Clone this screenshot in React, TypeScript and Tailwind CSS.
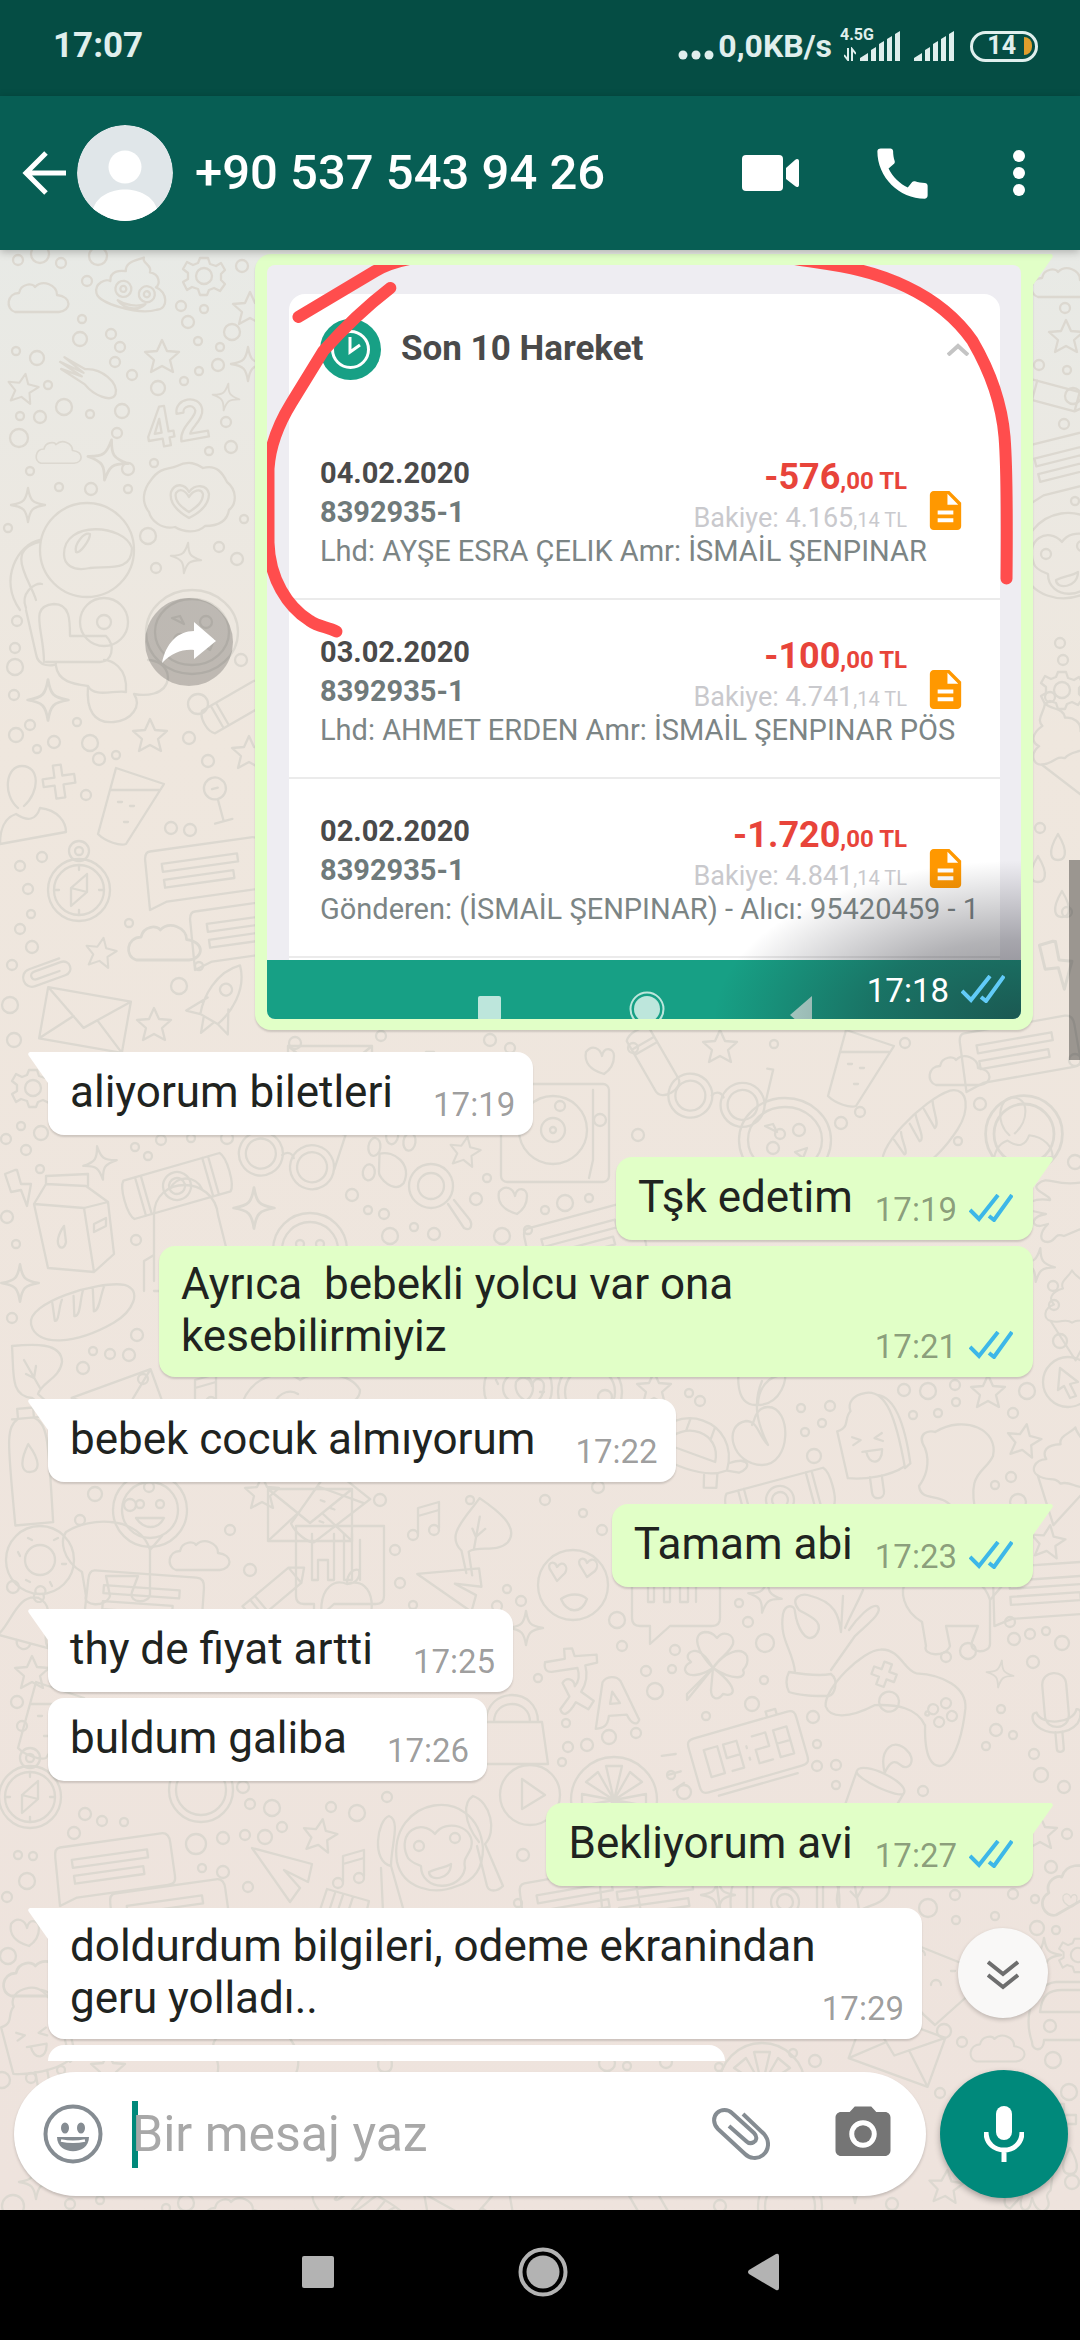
import React from "react";
import { MdCall, MdDescription, MdCameraAlt } from "react-icons/md";

type Placed = [name: string, x: number, y: number, rotate?: number, scale?: number];

const doodles: Placed[] = [
  ["cloud", 39, 297], ["poop", 131, 292, 8], ["gear", 204, 276], ["spoon", 90, 378, 25], ["star", 162, 356],
  ["star", 23, 388, 10, 0.9], ["star", 250, 308], ["sparkle", 248, 364], ["sparkle", 226, 397, 10, 0.8], ["fortyTwo", 176, 422, -10],
  ["cloud", 59, 452, 0, 0.75], ["sparkle", 108, 460, 10, 1.2], ["badge", 189, 498], ["sparkle", 28, 505], ["sparkle", 186, 558, 8, 0.9],
  ["astronaut", 84, 610], ["pizza", 192, 632], ["sparkle", 48, 700, 0, 1.2], ["star", 150, 735], ["tube", 238, 705, -30],
  ["star", 249, 752], ["person", 32, 800], ["plus", 59, 781, -8], ["drink", 130, 808], ["pin", 218, 800, -15],
  ["compass", 79, 890], ["chat", 205, 870, -8], ["chat", 250, 930, -8], ["cloud", 165, 942, 0, 1.2], ["clip", 45, 972, -20],
  ["star", 101, 952, 10, 0.9], ["envelope", 85, 1020, 10], ["star", 154, 1024], ["rocket", 220, 1000, 30],
  ["gear", 33, 1088], ["bolt", 19, 1188], ["sparkle", 100, 1163, -10], ["camera", 177, 1186, -16], ["backpack", 190, 1235],
  ["carton", 74, 1236], ["sparkle", 254, 1208, 0, 1.2], ["glasses", 285, 1160, 15], ["paw", 388, 1165, 8], ["magnifier", 440, 1190],
  ["star", 465, 1151, 10, 0.9], ["heart", 513, 1200], ["smile", 310, 1250], ["bread", 82, 1313, -8], ["sparkle", 20, 1283, 0, 1.1],
  ["leaf", 36, 1374], ["bottle", 30, 1464, -5], ["note", 202, 1392], ["envelope", 120, 1408, -20],
  ["record", 553, 1130], ["person", 1022, 1128, 0, 0.9], ["ring", 1024, 1134, 0, 1.2], ["hand", 1054, 1218], ["sparkle", 1038, 1265, 8],
  ["glasses", 715, 1100, 10], ["pizza", 785, 1140], ["bread", 925, 1135, -35], ["chat", 585, 1240, -15], ["icecream", 1072, 1310, 0, 0.9],
  ["bolt", 1056, 965, 5, 1.3], ["drop", 1058, 848], ["drop", 1062, 905], ["drop", 1038, 870], ["envelope", 330, 1072], ["gear", 430, 1070],
  ["star", 720, 1046], ["tube", 655, 1064, 60], ["chat", 1020, 1050, -10], ["heart", 600, 1060], ["drink", 860, 1070], ["cloud", 960, 1070],
  ["star", 1066, 336], ["cloud", 1062, 282], ["chat", 1078, 460, -14], ["monkey", 1064, 560], ["pencil", 1052, 395, 15], ["gear", 1062, 690],
  ["icecream", 1060, 745, -20], ["star", 988, 1391], ["arrow", 1068, 1382], ["star", 1024, 1440, 10], ["popsicle", 868, 1435, -8],
  ["plant", 762, 1425], ["turtle", 694, 1450, 20], ["blob", 955, 1470], ["icecream", 1064, 1470, 15], ["camera", 780, 1500, -15],
  ["star", 654, 1388], ["sparkle", 765, 1596, 10], ["loveEyes", 573, 1585], ["calendar", 676, 1592], ["star", 1048, 1541, 8], ["chat", 1052, 1590, -4],
  ["okHand", 835, 1650], ["clover", 713, 1668], ["dog", 950, 1610], ["mic", 1056, 1705, -5], ["ring", 590, 1392], ["heart", 530, 1390],
  ["donut", 518, 1388], ["shoe", 300, 1400], ["smile", 150, 1510], ["drink", 330, 1510, 20], ["envelope", 310, 1515], ["donut", 40, 1560],
  ["note", 425, 1520], ["leaf", 480, 1535, 40], ["star", 262, 1492], ["dog", 110, 1560], ["calendar", 340, 1570], ["cloud", 200, 1555],
  ["bell", 28, 1622, 15], ["chat", 145, 1600, 4], ["pencil", 275, 1592, -40], ["apple", 347, 1604], ["plane", 455, 1590, -20],
  ["star", 32, 1672], ["drink", 50, 1722], ["compass", 30, 1797], ["sparkle", 526, 1628], ["bag", 512, 1730], ["ring", 201, 1790],
  ["star", 320, 1835, 10], ["chat", 115, 1866, -8], ["plane", 282, 1876], ["note", 350, 1868], ["monkey", 437, 1852], ["play", 530, 1795],
  ["chat", 170, 1912, -8], ["heart", 25, 1932], ["cloud", 40, 1978, 0, 1.2], ["popsicle", 32, 2030, -10], ["bridge", 345, 1905],
  ["glyph", 592, 1675, -4], ["orange", 614, 1800], ["clock", 748, 1752, -16], ["controller", 900, 1695, 20],
  ["cup", 872, 1800, 25], ["sparkle", 1000, 1674, 8, 0.8], ["star", 1040, 1832], ["cloud", 1072, 1885, -30, 1.2], ["heart", 1070, 1900, 0, 0.5],
  ["chat", 660, 1898, -8], ["chat", 580, 1900, -10], ["camera", 785, 1902], ["sparkle", 718, 1895], ["leaf", 860, 1895, 20], ["pizzaSlice", 935, 1965],
  ["sparkle", 1044, 1955], ["gear", 1078, 1955, 0, 0.9], ["car", 1066, 2012], ["cloud", 998, 2048, 0, 0.9], ["envelope", 897, 2048, 20], ["orange", 762, 2086],
  ["blob", 250, 2060, 60], ["star", 108, 2068], ["drop", 385, 2060], ["star", 946, 2186, 5], ["sparkle", 36, 2182], ["cloud", 235, 2212],
  ["bread", 360, 2212, 35], ["envelope", 470, 2212, -10], ["ring", 790, 2206], ["sparkle", 855, 2186], ["hand", 1030, 2190, -60], ["drop", 1070, 2162],
  ["plus", 1060, 2120], ["tube", 650, 2206, 60],
];

const bubbles: [number, number, number][] = [
  [18, 260, 5], [40, 254, 9], [61, 263, 5], [98, 256, 9], [87, 281, 5], [242, 266, 6], [181, 306, 5], [204, 309, 4], [188, 322, 6],
  [232, 332, 8], [82, 319, 4], [80, 339, 7], [111, 334, 5], [120, 347, 5], [115, 362, 5], [37, 358, 7], [16, 351, 4], [132, 375, 5],
  [198, 341, 4], [220, 347, 4], [218, 365, 6], [199, 371, 4], [184, 381, 4], [158, 388, 7], [48, 385, 4], [64, 407, 8], [20, 416, 4],
  [40, 417, 6], [90, 414, 4], [122, 411, 7], [117, 433, 5], [19, 438, 9], [226, 422, 5], [231, 447, 6], [209, 451, 4], [154, 463, 4],
  [128, 469, 6], [128, 489, 4], [91, 489, 6], [59, 487, 4], [30, 471, 4], [8, 528, 4], [148, 536, 8], [244, 519, 4], [219, 547, 5],
  [237, 559, 6], [156, 568, 5], [17, 621, 5], [15, 648, 5], [15, 667, 8], [241, 660, 6], [198, 704, 10], [14, 695, 5], [30, 725, 5],
  [77, 722, 4], [16, 735, 7], [54, 742, 6], [90, 743, 8], [99, 759, 6], [37, 749, 4], [116, 755, 4], [189, 738, 6], [208, 761, 6],
  [86, 795, 5], [171, 828, 6], [190, 830, 6], [20, 866, 5], [42, 857, 5], [28, 889, 5], [31, 914, 4], [20, 929, 5], [32, 947, 6],
  [129, 923, 4], [12, 965, 5], [10, 1005, 8], [179, 986, 8], [199, 966, 4], [14, 1040, 7], [295, 1043, 6], [381, 1036, 5], [490, 1040, 6], [510, 1048, 5],
  [6, 1139, 5], [21, 1126, 4], [41, 1133, 7], [26, 1150, 5], [40, 1169, 4], [135, 1147, 4], [148, 1156, 4], [161, 1140, 5], [191, 1138, 4],
  [227, 1138, 6], [7, 1217, 6], [16, 1244, 4], [136, 1240, 5], [352, 1195, 6], [368, 1210, 4], [384, 1214, 5], [390, 1236, 8], [414, 1227, 4],
  [434, 1234, 6], [476, 1199, 6], [487, 1178, 4], [502, 1236, 8], [528, 1230, 4], [12, 1318, 5], [137, 1335, 6], [93, 1351, 4], [110, 1354, 5],
  [129, 1355, 6], [83, 1368, 6], [143, 1379, 5], [95, 1494, 7], [149, 1487, 5], [545, 1210, 4], [565, 1203, 8], [589, 1198, 4], [638, 1135, 6],
  [780, 1134, 5], [841, 1123, 6], [958, 1141, 4], [1075, 1162, 7], [1053, 1286, 5], [1054, 1305, 5], [1060, 1341, 7], [605, 1397, 7],
  [689, 1393, 4], [700, 1401, 5], [801, 1408, 4], [830, 1406, 5], [822, 1423, 4], [805, 1432, 4], [814, 1456, 7], [904, 1390, 6], [928, 1391, 8],
  [955, 1385, 5], [956, 1402, 4], [1027, 1391, 8], [913, 1415, 4], [938, 1413, 4], [1013, 1413, 5], [995, 1485, 4], [1011, 1477, 5],
  [1018, 1502, 8], [583, 1513, 4], [602, 1530, 5], [598, 1487, 6], [739, 1603, 4], [617, 1620, 8], [748, 1622, 5], [765, 1643, 9], [622, 1646, 5],
  [675, 1650, 5], [672, 1669, 4], [646, 1671, 5], [655, 1691, 8], [538, 1678, 4], [764, 1680, 4], [752, 1704, 7], [706, 1716, 4], [636, 1733, 5],
  [609, 1737, 7], [587, 1745, 6], [568, 1747, 5], [566, 1723, 4], [562, 1762, 4], [813, 1717, 6], [817, 1744, 4], [817, 1766, 5], [836, 1765, 5],
  [671, 1775, 4], [684, 1792, 7], [968, 1651, 8], [946, 1657, 5], [1010, 1622, 5], [1014, 1639, 6], [1030, 1634, 5], [1046, 1631, 4], [1062, 1643, 7],
  [1033, 1662, 6], [1001, 1709, 4], [996, 1730, 6], [1013, 1735, 4], [986, 1746, 4], [1034, 1754, 5], [1041, 1775, 7], [1064, 1787, 6], [923, 1791, 5],
  [13, 1587, 6], [17, 1702, 6], [22, 1726, 5],
  [400, 1583, 5], [413, 1605, 4], [507, 1589, 4], [521, 1601, 5], [497, 1606, 5], [85, 1814, 6], [102, 1821, 5], [124, 1822, 4],
  [74, 1833, 6], [243, 1787, 6], [250, 1804, 5], [272, 1808, 8], [331, 1807, 5], [357, 1813, 8], [387, 1797, 5], [282, 1827, 5], [265, 1837, 7],
  [245, 1835, 5], [223, 1838, 6], [196, 1844, 10], [18, 1855, 4], [33, 1856, 4], [27, 1881, 8], [7, 1897, 5], [202, 1868, 4], [223, 1872, 6],
  [248, 1887, 5], [523, 1855, 6], [518, 1903, 4], [8, 1956, 8], [836, 1785, 4], [1067, 1834, 5],
  [955, 1895, 5], [1013, 1894, 5], [1035, 1899, 4], [928, 1908, 9], [995, 1916, 4], [956, 1920, 4], [1037, 1928, 7], [1056, 1930, 4],
  [1051, 1867, 6], [944, 2031, 7], [962, 2042, 5], [1053, 2060, 8], [793, 2053, 4], [815, 2061, 6], [627, 2066, 4], [607, 2063, 8],
  [666, 2062, 6], [719, 2067, 4], [2, 2080, 8], [31, 2078, 5], [61, 2070, 4], [13, 2206, 11], [70, 2204, 5], [100, 2200, 4], [186, 2203, 8],
  [166, 2208, 4], [892, 2204, 6], [720, 2206, 6], [940, 2093, 5], [1069, 2092, 8], [1072, 2182, 7], [911, 2164, 4], [1075, 1060, 6],
  [1065, 308, 5], [1039, 365, 5], [1067, 370, 4], [1073, 396, 8], [1064, 424, 5], [1060, 643, 5], [1075, 501, 4], [1050, 697, 5], [1063, 660, 5],
  [1040, 828, 5], [1067, 912, 5], [905, 1043, 5], [774, 1044, 4], [633, 1048, 5], [560, 1106, 5], [600, 1120, 6], [860, 1112, 5], [980, 1104, 6],
  [130, 1505, 6], [230, 1530, 5], [380, 1500, 6], [395, 1550, 5], [470, 1500, 4], [545, 1500, 5], [250, 1570, 6], [80, 1520, 5],
];

function DoodleShapes() {
  return (
    <defs>
      <path id="cloud" d="M-24 15C-34 12-32-4-20-4C-18-14-6-14-4-10C4-18 18-12 18-2C34 0 32 14 20 15Z" />
      <g id="poop"><path d="M-34 6C-38-4-26-10-22-8C-24-18-14-20-8-20C-10-30 2-32 8-36C6-30 18-30 16-22C26-22 28-12 24-8C36-6 40 12 28 14C10 22-30 16-34 6ZM-12 10C-4 18 10 18 16 10C8 14-4 14-12 10Z" /><circle cx="-8" cy="-2" r="8" /><circle cx="-8" cy="-2" r="3" /><circle cx="16" cy="0" r="8" /><circle cx="16" cy="0" r="3" /></g>
      <g id="gear"><path d="M-4-18H4L6-12L12-10L17-13L21-6L17-2V4L21 8L16 15L10 12L5 14L3 19H-4L-6 13L-12 11L-17 14L-21 6L-16 3V-3L-21-7L-17-14L-11-11L-6-13Z" /><circle r="8" /></g>
      <path id="spoon" d="M-32-8L-8-6C6-14 28-8 30 4C30 14 10 14-2 8L-30 4L-8 2L-34-2L-8-2Z" />
      <path id="star" d="M0-16L5-5L17-4L8 4L11 16L0 10L-11 16L-8 4L-17-4L-5-5Z" />
      <path id="sparkle" d="M0-17C2-5 4-2 17 0C4 2 2 5 0 17C-2 5-4 2-17 0C-4-2-2-5 0-17Z" />
      <path id="fortyTwo" d="M-14-18L-30 10V14H-16V22H-9V14H-4V8H-9V-18ZM-16-6V8H-23ZM2-8C2-24 28-24 28-8C28 2 14 8 12 14H30V20H2C2 6 20 0 21-8C20-16 9-14 9-8Z" />
      <g id="badge"><path d="M-38-18C-28-32-20-28-12-32C0-38 8-34 14-30C28-34 34-24 38-16C48-8 48 6 40 12C38 24 28 28 16 28C8 36-6 34-14 29C-28 32-38 22-40 14C-48 4-46-8-38-18Z" /><path d="M0 20C-14 12-20 4-18-6C-14-16-4-14 0-6C6-14 18-14 20-4C20 6 12 14 0 20Z" /><path d="M0 14C-10 8-15 2-13-5C-9-10-4-8 0-1C4-8 12-10 14-4C14 4 8 9 0 14Z" /></g>
      <g id="astronaut"><ellipse cx="3" cy="-60" rx="47" ry="47" /><path d="M-20-56C-20-90 40-86 48-62C48-38 24-44 6-42C-12-38-20-46-20-56ZM-8-58C-10-66 0-78 6-76C6-70-4-56-8-58ZM-58 0L-48 44C-46 58-30 56-28 54M-58-2C-64 -16-50-28-42-26M-48-10C-54-30-80-60-44-68M-64 0C-86-30-66-66-44-70M-28 56C-26 72-10 74 4 76C2 100 10 114 30 112C48 110 58 96 50 84C60 86 82 86 84 68C84 54 70 50 64 50M4 76C10 88 30 80 42 82C44 56 26 50 20 50M-40 52C-40 20-56-4-30-6C-14-6-14 10-14 26H22C32 36 28 52 16 52H-38" /><circle cx="20" cy="12" r="24" /><circle cx="20" cy="12" r="7" /></g>
      <g id="pizza"><ellipse rx="46" ry="42" /><ellipse rx="37" ry="33" /><circle cx="14" cy="-10" r="6" /><circle cx="-12" cy="8" r="6" /><path d="M-20-14L-8-8L-12-16ZM10 12L22 8L18 18Z" /></g>
      <path id="tube" d="M-34-13H24C36-13 36 13 24 13H-34C-40 8-40-8-34-13ZM-24-13V13M-18-13V13" />
      <path id="person" d="M-32 44C-32 22-22 16-16 14C-4 22 4 20 8 8C26 10 34 22 34 32ZM-14 8C-30-6-26-34-10-34C8-34 8-8-8 6" />
      <path id="plus" d="M-4-16H4V-5H16V4H4V17H-5V4H-16V-4H-4Z" />
      <path id="drink" d="M-14-40L-32 26C-24 34-10 38-4 36L34-24ZM-20-18H30M-12-6H-8M0-2H4M-6 14H-2" />
      <path id="pin" d="M-11-12A11 11 0 1 1 11-12A11 11 0 1 1-11-12M-3-12H3M0-1V22M-9 22H9" />
      <g id="compass"><circle r="31" /><circle r="25" /><circle cy="-39" r="10" /><circle cy="-39" r="4" /><path d="M8-16L-8-2L-8 16L8 2ZM-8-2L8 2M0-25V-20M0 25V20M-25 0H-20M25 0H20" /></g>
      <path id="chat" d="M-52-26H50C56-26 58-22 58-16V18C58 24 56 26 50 26H-42L-60 32L-58-16C-58-22-56-26-52-26ZM-42-12H34V-4H-42ZM-42 4H28V12H-42Z" />
      <path id="clip" d="M18-8H-14C-26-8-26 10-14 10H18C28 10 28-4 18-4H-10C-16-4-16 4-10 4H14" />
      <path id="envelope" d="M-42-26H42V26H-42ZM-42-26L0 8L42-26M-42 26L-12-2M42 26L12-2" />
      <path id="rocket" d="M0-40C18-22 16 6 10 22H-10C-16 6-18-22 0-40ZM-12 4L-24 26L-10 22M12 4L24 26L10 22M-6 22L0 38L6 22M-6-12A6 6 0 1 1 6-12A6 6 0 1 1-6-12" />
      <path id="bolt" d="M-4-18L-14-14L-8 4L2 2L8 18L12-4L2-4L-2-18Z" />
      <g id="camera"><path d="M-50-20H50C56-14 56 14 50 20H-50C-56 14-56-14-50-20ZM-38-20V20M38-20V20M-32-20V20M32-20V20" /><circle r="14" /><circle r="8" /></g>
      <path id="backpack" d="M-36 46V-20C-36-60 24-60 28-20L38 20V56H-36M-36 20L-46 26V56M-20-46C-14-60 6-60 12-46" />
      <path id="carton" d="M-40-32L-28-52L12-50L34-34L40 18L20 36L-26 32ZM-40-32L10-28L34-34M10-28L20 36M-28-52V-60L14-62V-50M-10-10C-24 10-10 18-8 6ZM20-12L32-18V-10L20-4Z" />
      <g id="glasses"><circle cx="-25" r="22" /><circle cx="-25" r="15" /><circle cx="28" r="22" /><circle cx="28" r="15" /><path d="M-4-4C0-10 6-8 8-4M50-4L52-40L46-40" /></g>
      <g id="paw"><path d="M-10-10C4-16 24-4 18 16C10 28-8 14-8 8Z" /><ellipse cx="-16" cy="-16" rx="6" ry="9" /><ellipse cx="0" cy="-30" rx="6" ry="9" /><ellipse cx="18" cy="-26" rx="6" ry="9" /><ellipse cx="-18" cy="10" rx="6" ry="8" /></g>
      <g id="magnifier"><circle cx="-9" cy="-4" r="22" /><circle cx="-9" cy="-4" r="13" /><path d="M8 14L24 38C32 42 32 34 30 30L14 10" /></g>
      <path id="heart" d="M4 14C-10 10-16 2-14-8C-8-16 0-12 2-4C4-14 14-12 14-4C14 4 10 10 4 14Z" />
      <g id="smile"><circle r="37" /><circle r="28" /><circle cx="-10" cy="-6" r="4" /><circle cx="10" cy="-6" r="4" /><path d="M-14 8C-6 20 8 20 14 8Z" /></g>
      <path id="bread" d="M-52 4C-54-18 20-30 46-22C64-14 50 6 30 14C-10 30-50 28-52 4ZM-28-14L-28 4C-24 6-22-10-18-16M-6-18L-8 2C-2 4 0-14 4-22M14-22L12 0C18 0 20-14 26-24" />
      <path id="leaf" d="M-24-28C-4-30 26-32 26-12C24 4 6 8 2 20L20 36M-24-28C-22 0-26 22-4 24L14 38M-12-14L4 14M-10 0L-2 4L0-8" />
      <path id="bottle" d="M-8-46V-56H8V-46C22-38 20-20 18 60H-20C-20-20-22-38-8-46ZM-14-46H14M0-20C-12 0-8 8 0 8C8 8 12 0 0-20Z" />
      <g id="note"><path d="M-7 14V-12L14-18V8M-7-4L14-10" /><circle cx="-12" cy="15" r="5" /><circle cx="9" cy="10" r="5" /></g>
      <g id="record"><rect x="-52" y="-46" width="108" height="98" rx="6" /><circle r="34" /><circle r="12" /><circle r="3" /><path d="M40-40V30L36 48" /></g>
      <g id="ring"><circle r="32" /><circle r="25" /></g>
      <path id="hand" d="M30-36C0-30-6-44-16-34C-24-28-2-22-4-18C-20-20-28-16-26-8L-8-4C-22-2-24 8-14 8L-6 6C-14 14-16 24-6 24C2 24 0 14 10 18L34 8" />
      <path id="drop" d="M0-14C-12 6-6 12 0 12C6 12 12 6 0-14Z" />
      <g id="arrow"><circle r="25" /><path d="M-8-14L10 0L2 2L8 14L2 16L-4 4L-10 8Z" /></g>
      <path id="icecream" d="M0-44C-4-36-14-32-10-24C-24-20-26-12-20-6C-32-2-32 10-24 12L4 56L28 10C34 4 32-4 24-6C28-14 22-22 14-24C16-34 4-36 0-44ZM-24 12C-12 16-8 8 0 14C10 8 16 16 28 10" />
      <path id="popsicle" d="M-26 40L-30-8C-16-10-22-20-14-26C-16-34-10-42 4-42C24-42 30-14 32 36C16 44-10 44-26 40ZM16-38C34-32 38 0 38 34L32 38M-4 42V58C-4 66 8 66 8 58V42M-16 0L-8 4L-16 8M14 0L6 4L14 8M-8 16H12C10 32-4 30-4 16" />
      <path id="plant" d="M0 40C-30 40-40 0-16-4C-4-4-4 10 6 20C-4 0-10-20 0-44M0 40C30 40 30-18 6-18C-8-18-8 0-10 0M-4-20C20-20 26-50 22-50C6-50-4-36-4-20M-6-20C-30-20-24-60-20-66" />
      <path id="turtle" d="M-44 10C-36-44 34-44 38 8C20 24-24 24-44 10ZM-30 4C-20-26 20-26 24 4ZM-14-28V-16M12-28V-16M38 0C56-14 60-2 50 6L38 8M-30 16L-34 30L-22 30L-18 20M18 20L22 32L34 28L30 14" />
      <path id="blob" d="M-30-22C-40-38-24-40-20-38C10-56 44-40 38-14C30 4 10 0 22 48M-30-22C-24-6-30 8-36 16C-34 34-10 20 0 42" />
      <g id="loveEyes"><circle r="35" /><path d="M-22-14C-28-22-18-26-16-18C-10-26-4-18-8-12L-16-4ZM8-18C2-26 12-30 14-22C20-30 28-22 22-14L14-8ZM-12 14C-4 8 8 8 14 14C8 30-6 28-12 14Z" /></g>
      <path id="calendar" d="M-44-44H44V26C44 32 40 34 36 34H-6L-26 52V34H-36C-40 34-44 32-44 26ZM-28-36V10H-22V-10H-12V10H-6V-36M4-36V10H12V-36M20-30V10" />
      <path id="dog" d="M-44-28C-20-44 30-44 40-10V34C40 44 18 44 22 32L28 16H-4L0 36C-4 48-28 46-24 36L-28 12C-48 0-50-20-44-28ZM40-10L52-24" />
      <g id="donut"><circle r="34" /><circle r="15" /><path d="M-22-8L-20-4M-12-22L-8-20M14-20L18-22M22 4H26M-14 20L-10 22M10 22L12 26" /></g>
      <path id="shoe" d="M-60 10C-50-30-10-30 0-20C16-30 50-28 60-10C60 10 20 6 8 0C-10 12-50 20-60 10ZM-26 4C-20-10-8-10-2-6" />
      <path id="bell" d="M-26 20C-16 8-18-26 4-26C26-22 14 8 26 20ZM-6 20C-6 30 8 30 8 20M0-30A5 5 0 1 1 8-30A5 5 0 1 1 0-30" />
      <path id="pencil" d="M-34-10H26L38 0L26 10H-34ZM-24-10V10M-18-10V10M26-10V10" />
      <path id="apple" d="M0-20C-30-32-36 30-6 30C0 26 4 30 10 28C32 20 30-30 0-20ZM0-20C0-30 6-36 12-34C14-26 8-20 0-20" />
      <path id="plane" d="M-30-28L30-12L26 6L2-6L18 12L8 26Z" />
      <path id="bag" d="M-26-8C-26-44 26-44 26-8M-18-8C-18-32 18-32 18-8ZM-30-8H30L36 34H-34Z" />
      <g id="monkey"><path d="M-40 10C-50-56 40-70 46-4C46 20 34 30 20 34C-4 44-34 36-40 10ZM-30 4C-40-20-16-34-2-18C8-34 40-26 34-4C30 6 26 6 28 16C24 40-16 40-16 14C-20 12-28 10-30 4ZM-8 20C0 16 8 16 14 12C14 28-8 30-8 20Z" /><circle cx="-18" cy="-6" r="5" /><circle cx="18" cy="-14" r="5" /><path d="M-46 14C-66 10-60-32-48-36C-36-32-46-6-46 14ZM-46 14L-34 56M-56 16L-54 60M42-10C26-30 26-50 36-56C54-50 60-20 48-8L66 34C60 40 52 40 50 34L40-6" /></g>
      <g id="play"><circle r="30" /><path d="M-8-16L15 0L-8 14Z" /></g>
      <path id="bridge" d="M-30 20L-18-16L24-4L16 30M-10-12L-16 6M-2-10L-8 8M8-8L2 10" />
      <path id="glyph" d="M-46-16C-48-8-44-6-40-6L-14-8C-12 0-14 6-18 10C-18 2-26 0-30 6L-24 20L-34 32C-32 40-26 38-18 26L-6 34L0 26L-12 16C-6 8-4 0-6-10L6-12V-20L-16-20L-18-28H-26V-18ZM0 54L10 8C14 2 24 2 28 8L44 48C42 54 36 52 32 42H14C12 52 8 54 0 54ZM16 30L19 18L26 30Z" />
      <g id="orange"><circle r="43" /><path d="M0 0L-8-34H8ZM0 0L16-28L28-18ZM0 0L32-6V6ZM0 0L24 20L10 30ZM0 0L-6 32L-20 26ZM0 0L-32 6V-6ZM0 0L-28-18L-16-28Z" /></g>
      <path id="clock" d="M-48-28H48C56-28 56-24 56-20V20C56 26 54 28 48 28H-48C-56 28-56 24-56 20V-20C-56-26-54-28-48-28ZM-40 34H42M28-28V-34H38V-28M-42-14H-28V14H-42ZM-8 0H-22V-14H-8V14H-20M0-6V-4M0 6V8M8-14H22V0H8V14H22M30-14H44V14H30ZM30 0H44M-84-20L-70-18M-84 0H-70M-82 16L-70 12" />
      <g id="controller"><path d="M-66 36C-74 20-50-30-34-36C-16-44-4-24 8-26C34-34 60-30 66-10C72 14 74 40 66 50C56 60 44 50 34 20C20 6 0 10-20 18C-40 40-58 46-66 36Z" /><circle cx="46" cy="-8" r="5" /><circle cx="56" cy="2" r="5" /><circle cx="36" cy="2" r="5" /><circle cx="46" cy="12" r="5" /><circle cx="-8" cy="10" r="10" /><circle cx="32" cy="8" r="2" /><path d="M-34-18H-26V-26H-18V-18H-10V-10H-18V-2H-26V-10H-34Z" /></g>
      <path id="cup" d="M-26-20C-26-32 26-32 26-20C26-12-26-12-26-20ZM-26-20L-20 40H20L26-20M0-30C-16-50-6-66 10-60C24-56 22-40 10-44C2-46 0-40 0-30" />
      <path id="pizzaSlice" d="M-44-30L56 10L0 60C-24 40-46 10-44-30ZM-20-10A5 5 0 1 1-10-10M-4 20A5 5 0 1 1 6 20M16 6H20" />
      <path id="car" d="M-34 30C-44 0-30-28-10-30H20M-26 0C-24-18-16-22-4-22H20M-26 0H20M-34 30C-34 40-22 40-22 28H20M-22 14A6 6 0 1 1-10 14A6 6 0 1 1-22 14" />
      <path id="clover" d="M0 0C-16-16-22-34-8-36C0-36 2-32 4-30C10-38 22-34 20-24C16-14 6-10 0 0C12-16 28-22 34-12C36-4 32 0 30 2C34 10 22 14 0 0C14 10 24 22 18 26C14 28 12 26 10 26C4 34-2 30-2 22ZM0 0C-12 8-26 10-28 2C-28-4-24-4-22-6C-30-12-22-20-14-16C-6-12-4-6 0 0L-26 26V32Z" />
      <path id="okHand" d="M-40 22C-42 0-56-10-52-36C-50-46-40-46-40-38C-38-24-30-6-20-14C-8-28-26-34-36-40C-46-52-34-58-24-54C0-48 4-34 6-18M6-18L8-54M10-22C16-36 24-50 28-60M14-20C22-32 36-46 42-44C50-38 30-24 20-14L-4 20M-46 22C-34 24-14 26-4 24C4 30 0 44-6 46C-20 46-34 46-46 42C-50 34-48 26-46 22Z" />
      <path id="mic" d="M-12-20C-12-36 12-36 12-20V10C12 26-12 26-12 10ZM-20 6C-26 6-26 14-20 20C-10 30 10 30 20 20C24 14 26 6 20 6C16 20-16 20-20 6M-3 27V44C-3 48 4 48 4 44V27" />
    </defs>
  );
}

function Wallpaper() {
  return (
    <div aria-hidden="true" className="absolute inset-0 overflow-hidden bg-linear-to-b from-[#e8eae6] from-0% via-[#efe7de] via-25% to-[#eee3dd]">
      <svg viewBox="0 250 1080 1960" preserveAspectRatio="xMidYMin slice" className="size-full" fill="none" stroke="#dcd8d0" strokeWidth="2.300" strokeLinejoin="round" strokeLinecap="round">
        <DoodleShapes />
        {doodles.map(([name, x, y, rotate = 0, scale = 1], i) => (
          <use key={i} href={"#" + name} transform={`translate(${x} ${y}) rotate(${rotate}) scale(${scale})`} />
        ))}
        {bubbles.map(([x, y, r], i) => (
          <circle key={i} cx={x} cy={y} r={r} />
        ))}
      </svg>
    </div>
  );
}

function SignalBars() {
  return (
    <svg viewBox="0 0 40 30" className="h-[30px] w-10" fill="#e0efed">
      <path d="M0 30V27L8 22V30ZM11 19L16 16V30H11ZM19 13L24 10V30H19ZM27 8L32 5V30H27ZM35 3L40 0V30H35Z" />
    </svg>
  );
}

function StatusBar() {
  return (
    <div className="flex h-24 shrink-0 items-center bg-[#054d44] pr-[42px] pb-1 pl-[53px] text-[#e0efed]">
      <span className="text-[35px] leading-10 font-bold">17:07</span>
      <div className="ml-auto flex items-center">
        <svg viewBox="0 0 36 30" className="mr-1 h-[30px] w-9" fill="currentColor">
          <circle cx="5" cy="24" r="4.5" /><circle cx="18" cy="24" r="4.5" /><circle cx="31" cy="24" r="4.5" />
        </svg>
        <span className="text-[32px] leading-10 font-bold">0,0KB/s</span>
        <div className="relative ml-7">
          <SignalBars />
          <span className="absolute -top-1 -left-5 text-base leading-4 font-bold">4.5G</span>
          <svg viewBox="0 0 12 14" className="absolute bottom-0 -left-4 h-3.5 w-3" fill="none" stroke="currentColor" strokeWidth="2">
            <path d="M4 1V13L0 8M8 14V2L12 7" />
          </svg>
        </div>
        <div className="ml-3.5"><SignalBars /></div>
        <div className="ml-4 flex h-[31px] w-[68px] items-center justify-end overflow-hidden rounded-full border-3 border-current pr-[3px]">
          <span className="mr-2 text-[25px] leading-6 font-bold">14</span>
          <span className="h-[18px] w-2 rounded-r-full bg-[#e09d2c]" />
        </div>
      </div>
    </div>
  );
}

function Header() {
  return (
    <header className="relative z-10 flex h-[154px] shrink-0 items-center bg-[#075e54] pl-[22px] text-white shadow-[0_2px_8px_rgba(0,0,0,0.25)]">
      <button aria-label="Geri">
        <svg viewBox="0 0 44 44" className="h-11 w-11" fill="none" stroke="currentColor" strokeWidth="5">
          <path d="M44 22H4M24 2L4 22L24 42" />
        </svg>
      </button>
      <svg viewBox="0 0 96 96" className="ml-[11px] size-24 rounded-full" aria-label="Profil">
        <circle cx="48" cy="48" r="48" fill="#e0e6e9" />
        <circle cx="48" cy="42" r="16.500" fill="#fff" />
        <path d="M16 84C24 58 72 58 80 84L60 96H36Z" fill="#fff" />
      </svg>
      <h1 className="ml-[22px] text-[49px] leading-[60px] font-medium">+90 537 543 94 26</h1>
      <div className="ml-auto flex items-center pr-[54px]">
        <button aria-label="Görüntülü arama">
          <svg viewBox="0 0 57 36" className="h-9 w-[57px]" fill="currentColor">
            <rect width="41" height="36" rx="4" />
            <path d="M44 13L53 5C55 3 57 4 57 6V30C57 32 55 33 53 31L44 24Z" />
          </svg>
        </button>
        <button aria-label="Sesli arama" className="ml-[70px]"><MdCall className="size-[67px]" /></button>
        <button aria-label="Menü" className="ml-[76px]">
          <svg viewBox="0 0 14 48" className="h-12 w-3.5" fill="currentColor">
            <circle cx="7" cy="7" r="6" /><circle cx="7" cy="24" r="6" /><circle cx="7" cy="41" r="6" />
          </svg>
        </button>
      </div>
    </header>
  );
}

function Ticks({ className }: { className: string }) {
  return (
    <svg viewBox="0 0 44 28" className={"h-7 w-11 shrink-0 " + className} fill="none" stroke="currentColor" strokeWidth="4">
      <path d="M1 16L10 25L29 1M20 22L25 26L43 1" />
    </svg>
  );
}

function Stamp({ time, sent }: { time: string; sent?: boolean }) {
  return (
    <span className="flex items-end gap-3 self-end pb-3.5 text-[33px] leading-8 text-black/40">
      {time}
      {sent && <Ticks className="mb-1 text-[#3db7e8]" />}
    </span>
  );
}

function Tail({ sent }: { sent?: boolean }) {
  return sent ? (
    <svg viewBox="0 0 22 32" className="absolute top-0 left-full -ml-0.5 h-8 w-[22px]" fill="#e1ffc7">
      <path d="M0 0H20Q23 1 21 4L2 31H0Z" />
    </svg>
  ) : (
    <svg viewBox="0 0 22 32" className="absolute top-0 right-full -mr-0.5 h-8 w-[22px]" fill="#fff">
      <path d="M22 0H2Q-1 1 1 4L20 31H22Z" />
    </svg>
  );
}

type BubbleProps = { lines: string[]; time: string; sent?: boolean; tail?: boolean };

function Bubble({ lines, time, sent, tail }: BubbleProps) {
  const side = sent ? "self-end bg-[#e1ffc7] pr-5" : "self-start bg-white pr-[18px]";
  const corner = tail ? (sent ? "rounded-2xl rounded-tr-none" : "rounded-2xl rounded-tl-none") : "rounded-2xl";
  const spacing = tail ? "mt-[22px]" : "mt-1.5";
  const long = lines.length > 1;
  const size = long ? "w-[874px] max-w-full pt-3" : "pt-3.5";
  return (
    <div className={`relative pl-[22px] text-[44px] leading-[52px] text-[#202320] shadow-[0_2px_2px_rgba(0,0,0,0.14)] ${side} ${corner} ${spacing} ${size}`}>
      {tail && <Tail sent={sent} />}
      {lines.slice(0, -1).map((line) => (
        <p key={line} className="whitespace-pre">{line}</p>
      ))}
      <div className={sent ? "flex justify-between gap-[22px]" : "flex justify-between gap-10"}>
        <p className={long ? "pb-[15px]" : "pb-[17px]"}>{lines[lines.length - 1]}</p>
        <Stamp time={time} sent={sent} />
      </div>
    </div>
  );
}

type Movement = { date: string; whole: string; balance: string; note: string };

const movements: Movement[] = [
  { date: "04.02.2020", whole: "-576", balance: "4.165", note: "Lhd: AYŞE ESRA ÇELIK Amr: İSMAİL ŞENPINAR" },
  { date: "03.02.2020", whole: "-100", balance: "4.741", note: "Lhd: AHMET ERDEN Amr: İSMAİL ŞENPINAR PÖS" },
  { date: "02.02.2020", whole: "-1.720", balance: "4.841", note: "Gönderen: (İSMAİL ŞENPINAR) - Alıcı: 95420459 - 1" },
];

function MovementRow({ date, whole, balance, note }: Movement) {
  return (
    <div className="border-b-2 border-[#ebebeb] pt-[33px] pb-[27px] pl-[31px] text-[29px] leading-[39px]">
      <div className="flex h-[78px] items-start pr-[31px]">
        <div>
          <p className="font-bold text-[#4a4a4a]">{date}</p>
          <p className="font-bold text-[#6f7a7a]">8392935-1</p>
        </div>
        <div className="ml-auto pt-1 text-right">
          <p className="text-[36px] font-bold text-[#e8443a]">{whole}<span className="text-2xl leading-[39px]">,00 TL</span></p>
          <p className="text-[27px] leading-[35px] text-[#c9c9cd]">Bakiye: {balance}<span className="text-xl leading-[35px]">,14 TL</span></p>
        </div>
        <MdDescription className="mt-[33px] ml-[15px] size-[47px] shrink-0 text-[#ff9800]" />
      </div>
      <p className="whitespace-nowrap text-[#7c8585]">{note}</p>
    </div>
  );
}

function PhotoMessage() {
  return (
    <div className="mt-1 flex items-center justify-end gap-[22px]">
      <button aria-label="İlet" className="flex size-[88px] items-center justify-center rounded-full bg-black/20 text-white">
        <svg viewBox="0 0 54 42" className="h-[42px] w-[54px]" fill="currentColor">
          <path d="M32 1L54 20L32 38V29C20 28 10 32 0 42C4 22 16 10 32 10Z" />
        </svg>
      </button>
      <div className="relative rounded-2xl rounded-tr-none bg-[#e1ffc7] px-3 py-[11px] shadow-[0_2px_2px_rgba(0,0,0,0.14)]">
        <Tail sent />
        <div className="relative w-[754px] overflow-hidden rounded-lg bg-[#eeedf2] pt-[29px]">
          <div className="mr-[21px] ml-[22px] rounded-t-2xl bg-white pb-0.5">
            <div className="mb-[17px] flex h-[110px] items-center pr-[31px] pl-[31px]">
              <svg viewBox="0 0 61 61" className="size-[61px]" fill="none" stroke="#fff" strokeWidth="3">
                <circle cx="30.5" cy="30.5" r="30.5" fill="#17a085" stroke="none" />
                <circle cx="30.5" cy="30.5" r="18" />
                <path d="M30 18V33L40 26" />
              </svg>
              <h2 className="ml-5 text-[35px] leading-10 font-bold text-[#4a4a4a]">Son 10 Hareket</h2>
              <svg viewBox="0 0 22 13" className="ml-auto h-[13px] w-[22px]" fill="none" stroke="#c4c4c4" strokeWidth="4">
                <path d="M1 12L11 3L21 12" />
              </svg>
            </div>
            {movements.map((m) => <MovementRow key={m.date} {...m} />)}
          </div>
          <svg viewBox="0 0 754 59" className="block h-[59px] w-full bg-[#17a085]" fill="#bde6dc">
            <rect x="211" y="36" width="23" height="24" rx="2" />
            <circle cx="380" cy="49" r="13" />
            <circle cx="380" cy="49" r="16.500" fill="none" stroke="#bde6dc" strokeWidth="2" />
            <path d="M523 55L545 36V74Z" />
          </svg>
          <svg viewBox="0 0 754 755" className="absolute inset-0 size-full" fill="none" stroke="#ff4d4d" strokeWidth="12" strokeLinecap="round" strokeLinejoin="round">
            <path d="M31 52L108 6Q122-2 142-6" />
            <path d="M123 23Q88 50 56 86L24 138Q3 172 1 204V278C2 314 20 342 42 356C52 363 60 362 69 367" />
            <path d="M528-6C562 0 600 2 640 22Q682 42 706 76Q734 124 738 172Q741 210 740 314" />
          </svg>
          <div className="absolute right-0 bottom-0 h-[160px] w-[310px] bg-[radial-gradient(ellipse_at_bottom_right,rgba(30,30,40,0.55),rgba(30,30,40,0.34)_35%,transparent_70%)]" />
          <div className="absolute right-4 bottom-3 flex items-end gap-3 text-[33px] leading-8 text-white">
            17:18
            <Ticks className="mb-1 text-[#62cbf8]" />
          </div>
        </div>
      </div>
    </div>
  );
}

const messages: BubbleProps[] = [
  { lines: ["aliyorum biletleri"], time: "17:19", tail: true },
  { lines: ["Tşk edetim"], time: "17:19", sent: true, tail: true },
  { lines: ["Ayrıca  bebekli yolcu var ona", "kesebilirmiyiz"], time: "17:21", sent: true },
  { lines: ["bebek cocuk almıyorum"], time: "17:22", tail: true },
  { lines: ["Tamam abi"], time: "17:23", sent: true, tail: true },
  { lines: ["thy de fiyat artti"], time: "17:25", tail: true },
  { lines: ["buldum galiba"], time: "17:26" },
  { lines: ["Bekliyorum avi"], time: "17:27", sent: true, tail: true },
  { lines: ["doldurdum bilgileri, odeme ekranindan", "geru yolladı.."], time: "17:29", tail: true },
];

function Composer() {
  return (
    <form className="relative flex shrink-0 items-center gap-3.5 pt-[9px] pr-3 pb-3 pl-3.5" onSubmit={(e) => e.preventDefault()}>
      <div className="flex h-[124px] min-w-0 flex-1 items-center rounded-full bg-white pr-[30px] pl-[29px] shadow-[0_2px_3px_rgba(0,0,0,0.18)]">
        <button type="button" aria-label="Emoji">
          <svg viewBox="0 0 60 60" className="size-[60px]" fill="none" stroke="#858c92" strokeWidth="4">
            <circle cx="30" cy="30" r="27.500" />
            <ellipse cx="22" cy="24" rx="4" ry="5.500" fill="#858c92" stroke="none" />
            <ellipse cx="38" cy="24" rx="4" ry="5.500" fill="#858c92" stroke="none" />
            <path d="M14 33H46C46 52 14 52 14 33Z" fill="#858c92" stroke="none" />
            <path d="M18 36.500Q30 39 42 36.500" stroke="#fff" strokeWidth="2.500" />
          </svg>
        </button>
        <span className="ml-[29px] h-[67px] w-1.5 bg-[#00897b]" />
        <input aria-label="Bir mesaj yaz" placeholder="Bir mesaj yaz" className="-ml-1.5 h-20 min-w-0 flex-1 bg-transparent text-[50px] outline-none placeholder:text-[#a8a8a8]" />
        <button type="button" aria-label="Ekle">
          <svg viewBox="0 0 58 52" className="h-[52px] w-[58px]" fill="none" stroke="#858c92" strokeWidth="4">
            <path d="M31 6L52 26C58 33 57 42 51 47C45 52 37 50 33 46L6 21C1 16 1 9 5 5C9 1 16 1 20 5L42 25C46 29 44 33 42 34C39 36 36 35 34 33L17 18" />
          </svg>
        </button>
        <button type="button" aria-label="Kamera" className="ml-[60px]">
          <MdCameraAlt className="size-[66px] text-[#757575]" />
        </button>
      </div>
      <button type="button" aria-label="Sesli mesaj" className="flex size-32 items-center justify-center rounded-full bg-[#00897b] text-white shadow-[0_3px_6px_rgba(0,0,0,0.3)]">
        <svg viewBox="0 0 40 56" className="h-14 w-10" fill="none" stroke="currentColor" strokeWidth="5">
          <rect x="12" y="0" width="16" height="34" rx="8" fill="currentColor" stroke="none" />
          <path d="M2 26C2 50 38 50 38 26M20 43V56" />
        </svg>
      </button>
    </form>
  );
}

function NavBar() {
  return (
    <nav className="flex h-[130px] shrink-0 items-center justify-center bg-black pb-1.5 text-[#b3b3b3]">
      <button aria-label="Son uygulamalar" className="size-8 rounded-xs bg-current" />
      <button aria-label="Ana ekran" className="mr-[180px] ml-[184px]">
        <svg viewBox="0 0 50 50" className="size-[50px]" fill="currentColor">
          <circle cx="25" cy="25" r="16.500" />
          <circle cx="25" cy="25" r="22.500" fill="none" stroke="currentColor" strokeWidth="4" />
        </svg>
      </button>
      <button aria-label="Geri dön">
        <svg viewBox="0 0 31 38" className="h-[38px] w-[31px]" fill="currentColor">
          <path d="M1 17L28 1Q31 0 31 3V35Q31 38 28 37L1 21Q-1 19 1 17Z" />
        </svg>
      </button>
    </nav>
  );
}

export default function App() {
  return (
    <div className="flex h-screen flex-col overflow-hidden font-['Roboto',sans-serif]">
      <StatusBar />
      <Header />
      <main className="relative flex min-h-0 flex-1 flex-col">
        <Wallpaper />
        <div className="relative flex min-h-0 flex-1 flex-col overflow-hidden pr-[47px] pl-12 *:shrink-0">
          <PhotoMessage />
          {messages.map((m) => <Bubble key={m.time + m.lines[0]} {...m} />)}
          <div className="mt-1.5 h-[83px] w-[677px] rounded-2xl bg-white" />
        </div>
        <Composer />
        <button aria-label="En alta git" className="absolute right-8 bottom-48 flex size-[90px] items-center justify-center rounded-full bg-[#f9f8f7] shadow-[0_2px_4px_rgba(0,0,0,0.2)]">
          <svg viewBox="0 0 32 30" className="mt-1 h-[30px] w-8" fill="none" stroke="#6e6e6e" strokeWidth="4">
            <path d="M1 2L16 14L31 2M1 15L16 27L31 15" />
          </svg>
        </button>
        <div className="absolute top-[610px] right-0 h-[200px] w-[11px] bg-black/35" />
      </main>
      <NavBar />
    </div>
  );
}
